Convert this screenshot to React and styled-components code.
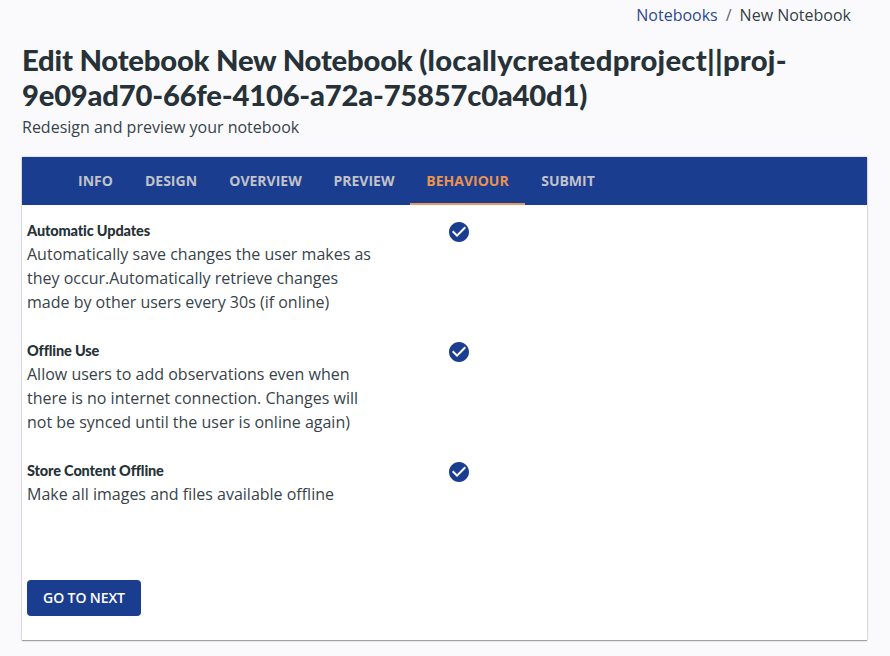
import React from "react";
import styled, { createGlobalStyle } from "styled-components";

const GlobalStyle = createGlobalStyle`
  *, *::before, *::after { box-sizing: border-box; }
  html { height: 100%; }
  body {
    margin: 0;
    min-height: 100%;
    background: #fafafc;
    color: #263238;
    font-family: "Open Sans", sans-serif;
    font-size: 16px;
    line-height: 24px;
    overflow: hidden;
  }
`;

const Page = styled.div`
  height: 656px;
  padding: 3px 23px 0 22px;
`;

const Breadcrumbs = styled.nav`
  display: flex;
  justify-content: flex-end;
  padding-right: 16px;
`;

const Crumb = styled.a`
  color: ${({ $link }) => ($link ? "#2c4a94" : "#353f46")};
  text-decoration: none;
`;

const Separator = styled.span`
  margin: 0 8px;
  color: #5c6670;
`;

const Title = styled.h1`
  margin: 15px 0 0;
  font-family: Lato, sans-serif;
  font-size: 29.2px;
  font-weight: 900;
  line-height: 35px;
  white-space: nowrap;
`;

const TitlePart = styled.span`
  letter-spacing: ${({ $tracking }) => $tracking}px;
`;

const Subtitle = styled.p`
  margin: 3px 0 18px;
  color: #38434a;
`;

const Card = styled.section`
  height: 483px;
  background: #fff;
  box-shadow: 0 1px 1px rgba(0, 0, 0, 0.3), 0 0 2px rgba(0, 0, 0, 0.25);
`;

const TabBar = styled.div`
  display: flex;
  height: 48px;
  padding-left: 40px;
  background: #1b3d90;
`;

const Tab = styled.button`
  height: 48px;
  padding: 2px 0 0;
  width: ${({ $width }) => $width}px;
  border: 0;
  border-bottom: 2px solid ${({ $active }) => ($active ? "#e29a62" : "transparent")};
  background: none;
  color: ${({ $active }) => ($active ? "#e8934f" : "#c0c3ca")};
  font: 700 14px/44px "Open Sans", sans-serif;
  white-space: nowrap;
`;

const Content = styled.div`
  padding: 13px 5px 0;
`;

const Setting = styled.div`
  display: grid;
  grid-template-columns: 422px 1fr;
  height: 120px;
`;

const SettingTitle = styled.h2`
  margin: 0 0 -2px;
  font: 900 14.5px/26px Lato, sans-serif;
  letter-spacing: -0.14px;
`;

const Description = styled.p`
  margin: 0;
  color: #38434a;
  white-space: pre-line;
`;

const CheckIcon = styled.svg`
  display: block;
  width: 20px;
  height: 20px;
  margin-top: 4px;
`;

const NextButton = styled.button`
  width: 114px;
  height: 36px;
  margin-top: 2px;
  padding: 0;
  border: 0;
  border-radius: 4px;
  background: #1b3d90;
  color: #fff;
  font: 600 14px/24px "Open Sans", sans-serif;
  letter-spacing: -0.1px;
`;

const tabs = [
  { label: "INFO", width: 67 },
  { label: "DESIGN", width: 84 },
  { label: "OVERVIEW", width: 105 },
  { label: "PREVIEW", width: 92 },
  { label: "BEHAVIOUR", width: 115, active: true },
  { label: "SUBMIT", width: 86 },
];

const settings = [
  {
    title: "Automatic Updates",
    text: "Automatically save changes the user makes as\nthey occur.Automatically retrieve changes\nmade by other users every 30s (if online)",
  },
  {
    title: "Offline Use",
    text: "Allow users to add observations even when\nthere is no internet connection. Changes will\nnot be synced until the user is online again)",
  },
  { title: "Store Content Offline", text: "Make all images and files available offline" },
];

export default function App() {
  return (
    <>
      <GlobalStyle />
      <Page>
        <Breadcrumbs>
          <Crumb $link>Notebooks</Crumb>
          <Separator>/</Separator>
          <Crumb>New Notebook</Crumb>
        </Breadcrumbs>
        <Title>
          <TitlePart $tracking={-0.21}>Edit Notebook New Notebook </TitlePart>
          <TitlePart $tracking={0.25}>(locallycreatedproject||proj-</TitlePart>
          <br />
          <TitlePart $tracking={-0.21}>9e09ad70-66fe-4106-a72a-75857c0a40d1)</TitlePart>
        </Title>
        <Subtitle>Redesign and preview your notebook</Subtitle>
        <Card>
          <TabBar>
            {tabs.map((t) => (
              <Tab key={t.label} $width={t.width} $active={t.active}>
                {t.label}
              </Tab>
            ))}
          </TabBar>
          <Content>
            {settings.map((s) => (
              <Setting key={s.title}>
                <div>
                  <SettingTitle>{s.title}</SettingTitle>
                  <Description>{s.text}</Description>
                </div>
                <CheckIcon viewBox="2 2 20 20">
                  <path
                    fill="#1b3d90"
                    d="M12 2C6.48 2 2 6.48 2 12s4.48 10 10 10 10-4.48 10-10S17.52 2 12 2zm-2 15l-5-5 1.41-1.41L10 14.17l7.59-7.59L19 8l-9 9z"
                  />
                </CheckIcon>
              </Setting>
            ))}
            <NextButton>GO TO NEXT</NextButton>
          </Content>
        </Card>
      </Page>
    </>
  );
}
